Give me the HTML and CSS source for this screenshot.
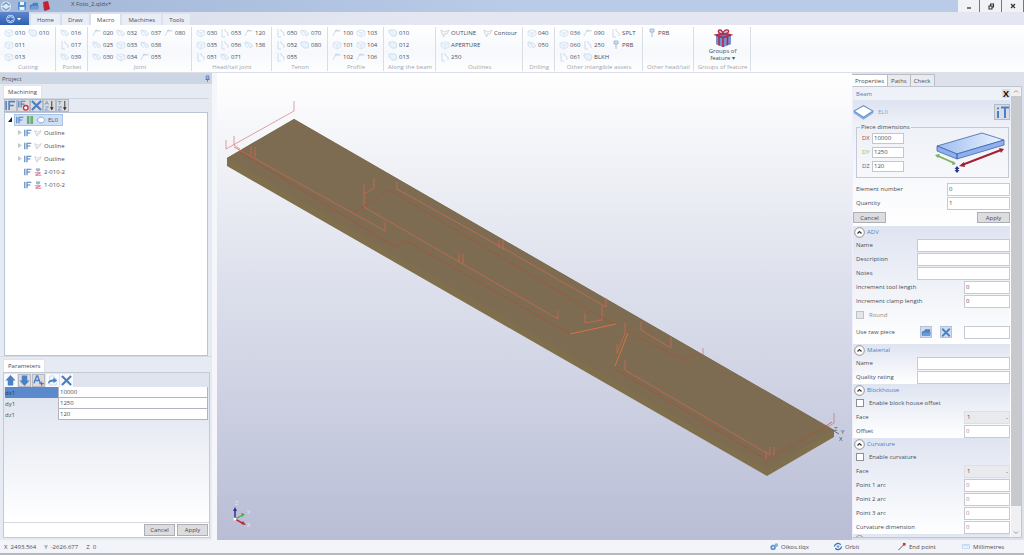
FILE: index.html
```html
<!DOCTYPE html>
<html lang="en">
<head>
<meta charset="utf-8">
<title>X Foto_2.qldx*</title>
<link rel="stylesheet" href="styles.css">
</head>
<body>
<svg class="defs" aria-hidden="true">
  <symbol id="box" viewBox="0 0 10 10"><path d="M1 3l4-1 4 1v4l-4 2-4-2zM1 3l4 2 4-2M5 5v4" fill="#eef4fb" stroke="#c3d8ee" stroke-width=".7"/></symbol>
  <symbol id="bend" viewBox="0 0 10 10"><path d="M2 1v8h3M5 3l3 2v3M5 3V1" fill="none" stroke="#bdd3eb"/></symbol>
  <symbol id="cut" viewBox="0 0 10 10"><path d="M1 2l5 1 3 3-3 2-2-4zM1 2v3l3 3" fill="#e8f1fa" stroke="#bdd5ee" stroke-width=".8"/></symbol>
  <symbol id="saw" viewBox="0 0 10 10"><path d="M1 8l3-6 5 1" fill="none" stroke="#c3d5e6"/><path d="M3 3h4" stroke="#9fb2c6" stroke-width=".7"/></symbol>
  <symbol id="slab" viewBox="0 0 10 10"><path d="M1 2h6l2 2-1 4H4L1 5z" fill="#e4f0fa" stroke="#b2d0ec" stroke-width=".8"/></symbol>
  <symbol id="outl" viewBox="0 0 10 10"><path d="M1 2l4 2 4-2-2 4H4v3L2 6z" fill="#fafafa" stroke="#b3b7bd" stroke-width=".7"/></symbol>
  <symbol id="pin" viewBox="0 0 10 10"><path d="M3 1h4v3H3zM5 4v5" fill="#c7dbf0" stroke="#6d96c8" stroke-width=".8"/></symbol>
  <symbol id="if" viewBox="0 0 12 12"><path d="M1.200 1v10M4.500 11V1.800H11M4.500 6H9.500" fill="none" stroke="#4e7fbf" stroke-width="1.700"/></symbol>
  <symbol id="cross" viewBox="0 0 12 12"><path d="M1 1l10 10M11 1L1 11" stroke="#4a7fc4" stroke-width="2.400"/></symbol>
  <symbol id="arrow" viewBox="0 0 12 12"><path d="M6 0l5.500 6H9v5.500H3V6H.5z" fill="#4a80c6"/></symbol>
  <symbol id="op" viewBox="0 0 10 10"><path d="M3 1h4v2H3zM5 3v2" fill="#bcd0ea" stroke="#6d93c8" stroke-width=".8"/><path d="M1 6h7M2 9h7M8 6L2 9" stroke="#d1596b" fill="none"/></symbol>
  <symbol id="plate" viewBox="0 0 20 14"><path d="M1 6v2l9 6 9-6V6l-9 6z" fill="#8cb2e2" stroke="#6b97d2" stroke-width=".5"/><path d="M1 6l9-5 9 5-9 6z" fill="#fff" stroke="#6b97d2"/></symbol>
  <symbol id="chev" viewBox="0 0 11 11"><circle cx="5.500" cy="5.500" r="4.800" fill="#fff" stroke="#777" stroke-width=".8"/><path d="M3.500 6.500l2-2 2 2" fill="none" stroke="#333" stroke-width="1.200"/></symbol>
  <symbol id="sort" viewBox="0 0 12 12"><path d="M1 5l2-4 2 4M1.500 4h3M1 7.500h4l-4 3.500h4" fill="none" stroke="#6d9bd2" stroke-width=".9"/><path d="M8.500 1v9" stroke="#333"/><path d="M6.500 8h4l-2 3.500z" fill="#333"/></symbol>
  <symbol id="folder" viewBox="0 0 12 10"><path d="M1 9V4l3-1 1-2h6v8z" fill="#4b82c4"/><path d="M1 9l2-4h9l-1 4z" fill="#6c9cd6"/></symbol>
</svg>

<header class="titlebar">
  <div class="quick">
    <svg class="logo" viewBox="0 0 12 12"><circle cx="6" cy="6" r="5.500" fill="#dce8f5"/><path d="M2 5l4-3 4 3M2 7l4 3 4-3" fill="none" stroke="#6a96bd" stroke-width="1.300"/></svg>
    <svg class="i10" viewBox="0 0 10 10"><path d="M1 1h8v8H1z" fill="#4d8fd0"/><path d="M3 1h4v3H3zM2.500 6h5v3h-5z" fill="#eaf3fc"/></svg>
    <svg class="i10" viewBox="0 0 12 10"><use href="#folder"/></svg>
    <svg class="i10" viewBox="0 0 10 10"><path d="M2 1l5-1 2 8-5 2z" fill="#c41f35"/><path d="M2 1l2 9-1-1z" fill="#7c1020"/></svg>
  </div>
  <h1>X Foto_2.qldx*</h1>
  <div class="winbtns"><button aria-label="Minimize"><svg viewBox="0 0 8 8"><path d="M2 6h4" stroke="#333" stroke-width="1.300"/></svg></button><button aria-label="Restore"><svg viewBox="0 0 8 8"><path d="M2 4h3v3H2zM3.500 4V2h3v3H5" fill="none" stroke="#333" stroke-width="1.100"/></svg></button><button aria-label="Close"><svg viewBox="0 0 8 8"><path d="M2 2l4 4M6 2L2 6" stroke="#333" stroke-width="1.200"/></svg></button></div>
</header>

<nav class="tabs">
  <button class="app" aria-label="Application menu"><svg viewBox="0 0 18 10"><circle cx="5.500" cy="5" r="3.800" fill="none" stroke="#c5dbf7"/><path d="M3 4l2.500-1.500L8 4M3 6l2.500 1.500L8 6" fill="none" stroke="#dceafc" stroke-width=".9"/><path d="M12 4h4l-2 2.500z" fill="#fff"/></svg></button>
  <button>Home</button><button>Draw</button><button class="on">Macro</button><button>Machines</button><button>Tools</button>
</nav>

<section class="ribbon">
  <div class="group"><div class="items">
    <button><svg><use href="#box"/></svg>010</button><button><svg><use href="#box"/></svg>011</button><button><svg><use href="#box"/></svg>013</button><button><svg><use href="#slab"/></svg>010</button></div><h2>Cutting</h2></div>
  <div class="group"><div class="items">
    <button><svg><use href="#cut"/></svg>016</button><button><svg><use href="#bend"/></svg>017</button><button><svg><use href="#cut"/></svg>039</button></div><h2>Pocket</h2></div>
  <div class="group"><div class="items">
    <button><svg><use href="#saw"/></svg>020</button><button><svg><use href="#cut"/></svg>025</button><button><svg><use href="#cut"/></svg>030</button>
    <button><svg><use href="#cut"/></svg>032</button><button><svg><use href="#box"/></svg>033</button><button><svg><use href="#box"/></svg>034</button>
    <button><svg><use href="#cut"/></svg>037</button><button><svg><use href="#cut"/></svg>038</button><button><svg><use href="#saw"/></svg>055</button>
    <button><svg><use href="#saw"/></svg>080</button></div><h2>Joint</h2></div>
  <div class="group"><div class="items">
    <button><svg><use href="#box"/></svg>030</button><button><svg><use href="#box"/></svg>035</button><button><svg><use href="#bend"/></svg>051</button>
    <button><svg><use href="#bend"/></svg>053</button><button><svg><use href="#bend"/></svg>056</button><button><svg><use href="#cut"/></svg>071</button>
    <button><svg><use href="#saw"/></svg>120</button><button><svg><use href="#cut"/></svg>138</button></div><h2>Head/tail joint</h2></div>
  <div class="group"><div class="items">
    <button><svg><use href="#bend"/></svg>050</button><button><svg><use href="#bend"/></svg>052</button><button><svg><use href="#bend"/></svg>055</button>
    <button><svg><use href="#cut"/></svg>070</button><button><svg><use href="#slab"/></svg>080</button></div><h2>Tenon</h2></div>
  <div class="group"><div class="items">
    <button><svg><use href="#saw"/></svg>100</button><button><svg><use href="#box"/></svg>101</button><button><svg><use href="#saw"/></svg>102</button>
    <button><svg><use href="#box"/></svg>103</button><button><svg><use href="#box"/></svg>104</button><button><svg><use href="#saw"/></svg>106</button></div><h2>Profile</h2></div>
  <div class="group"><div class="items">
    <button><svg><use href="#slab"/></svg>010</button><button><svg><use href="#slab"/></svg>012</button><button><svg><use href="#slab"/></svg>013</button></div><h2>Along the beam</h2></div>
  <div class="group"><div class="items free">
    <button><svg><use href="#outl"/></svg>OUTLINE</button><button><svg><use href="#box"/></svg>APERTURE</button><button><svg><use href="#bend"/></svg>250</button>
    <button><svg><use href="#outl"/></svg>Contour</button></div><h2>Outlines</h2></div>
  <div class="group"><div class="items">
    <button><svg><use href="#box"/></svg>040</button><button><svg><use href="#cut"/></svg>050</button></div><h2>Drilling</h2></div>
  <div class="group"><div class="items wide">
    <button><svg><use href="#box"/></svg>036</button><button><svg><use href="#box"/></svg>060</button><button><svg><use href="#bend"/></svg>061</button>
    <button><svg><use href="#saw"/></svg>090</button><button><svg><use href="#bend"/></svg>250</button><button><svg><use href="#slab"/></svg>BLKH</button>
    <button><svg><use href="#bend"/></svg>SPLT</button><button><svg><use href="#pin"/></svg>PRB</button></div><h2>Other intangible assets</h2></div>
  <div class="group"><div class="items">
    <button><svg><use href="#pin"/></svg>PRB</button></div><h2>Other head/tail</h2></div>
  <div class="group"><button class="big"><svg viewBox="0 0 20 20"><path d="M3 7l8-2 7 2v9l-8 3-7-3z" fill="#5a74c0"/><path d="M3 7l7 3 8-3v9l-8 3-7-3z" fill="#7590d4"/><path d="M6 8v9.500M10 10v9M14.500 8.500V17M3 7l7 3 8-3-7-2z" fill="none" stroke="#b12a45" stroke-width="1.600"/><path d="M10 6C5 6 4 2 7 2c2 0 3 3 3 4 0-2 2-5 5-4 2 2-1 4-5 4" fill="#e8b9c8" stroke="#b12a45" stroke-width="1.300"/></svg>Groups of<br>feature ▾</button><h2>Groups of feature</h2></div>
</section>

<main class="work">
  <aside class="left">
    <div class="dockhead">Project<svg viewBox="0 0 8 8"><path d="M2.500 1h3v4h-3zM1.500 5h5M4 5v3" fill="#a9bfe6" stroke="#4d6fb4" stroke-width=".8"/></svg></div>
    <div class="machining">
      <div class="tab">Machining</div>
      <div class="tools boxed">
        <button aria-label="If"><svg><use href="#if"/></svg></button>
        <button aria-label="Remove if"><svg viewBox="0 0 12 12"><use href="#if" width="9" height="9"/><circle cx="8.500" cy="8.500" r="2.500" fill="#fff" stroke="#d02c3a" stroke-width="1.500"/></svg></button>
        <button aria-label="Delete"><svg><use href="#cross"/></svg></button>
        <button aria-label="Sort ascending"><svg><use href="#sort"/></svg></button>
        <button aria-label="Sort by type"><svg viewBox="0 0 12 12"><path d="M1 1.500h4M3 1.500V5M1 7.500h4l-4 3.500h4" fill="none" stroke="#6d9bd2"/><path d="M8.500 1v9" stroke="#333"/><path d="M6.500 8h4l-2 3.500z" fill="#333"/></svg></button>
      </div>
      <ul class="tree">
        <li class="root"><i class="open"></i><span class="sel"><svg><use href="#if"/></svg><svg viewBox="0 0 9 9"><path d="M1 0h3v9H1zM5 0h3v9H5z" fill="#6eae68"/></svg><svg class="pl" viewBox="0 0 12 10"><path d="M1 5l3-3.500h4L11 5 8 8.500H4z" fill="#fff" stroke="#6f9ad2"/></svg>EL0</span></li>
        <li><i class="shut"></i><svg><use href="#if"/></svg><svg><use href="#outl"/></svg>Outline</li>
        <li><i class="shut"></i><svg><use href="#if"/></svg><svg><use href="#outl"/></svg>Outline</li>
        <li><i class="shut"></i><svg><use href="#if"/></svg><svg><use href="#outl"/></svg>Outline</li>
        <li><i></i><svg><use href="#if"/></svg><svg><use href="#op"/></svg>2-010-2</li>
        <li><i></i><svg><use href="#if"/></svg><svg><use href="#op"/></svg>1-010-2</li>
      </ul>
    </div>
    <div class="params">
      <div class="tab">Parameters</div>
      <div class="parbox">
        <div class="tools">
          <button aria-label="Move up"><svg><use href="#arrow"/></svg></button>
          <button aria-label="Move down" class="gray"><svg class="flip"><use href="#arrow"/></svg></button>
          <button aria-label="Add text" class="gray"><svg viewBox="0 0 12 12"><path d="M1 9l3-8h1l3 8M2.500 6h4" fill="none" stroke="#4a80c6" stroke-width="1.500"/><path d="M9.500 7v5M7 9.500h5" stroke="#d02c3a"/></svg></button>
          <button aria-label="Export"><svg viewBox="0 0 12 12"><path d="M3 1h4l3 3v7H3z" fill="#f6f9fd" stroke="#b8c9df" stroke-width=".7"/><path d="M1 10c0-4 3-5 6-5V2.500L11 6 7 9V7C4 7 2 8 1 10z" fill="#4a80c6"/></svg></button>
          <button aria-label="Delete parameter"><svg><use href="#cross"/></svg></button>
        </div>
        <table>
          <tr class="cur"><th><label for="dx1">dx1</label></th><td><input id="dx1" value="10000"></td></tr>
          <tr><th><label for="dy1">dy1</label></th><td><input id="dy1" value="1250"></td></tr>
          <tr><th><label for="dz1">dz1</label></th><td><input id="dz1" value="120"></td></tr>
        </table>
        <div class="foot"><button class="btn">Cancel</button><button class="btn">Apply</button></div>
      </div>
    </div>
  </aside>

  <section class="view">
    <svg viewBox="217 73 635 467">
      <path d="M227 158l67-39 540 311v7l-67 39-540-310z" fill="#7f6f4c"/>
      <path d="M227 158l67-39 540 311-67 39z" fill="#7e6c52"/>
      <g fill="none" stroke="#c8505a" stroke-opacity=".65" stroke-width=".8">
        <path d="M226 140v9l68-38v-10M234 136v9l6 4M834 413v10l-8 5M703 348v8"/>
      </g>
      <g fill="none" stroke="#c96a52" stroke-opacity=".9" stroke-width=".9">
        <path d="M234 147l151 84v-9M251 146v9M255 147v10M364 184v23l97 56 97 56v-8M364 194l10-6v-10M397 182v7l106 59 103 59v-9M602 306v14l-17 3v-10M499 240v8M503 240v10M459 253v9M463 254v10M625 323v10l-8 20v-9M641 322v8l30 18v-11M625 360v10l145 85v-8M774 447v9M766 451v9"/>
      </g>
      <g fill="none" stroke="#a94f35" stroke-opacity=".75" stroke-width=".9">
        <path d="M240 152l155 95 10-7 165 94M355 212l34-22 226 135M628 332l55 28 10-6M613 368l154 92 57-33 8-5"/>
      </g>
      <path d="M570 334l46-10M628 333l-13 33" stroke="#d8733f" fill="none"/>
      <path d="M834 431l5 3" stroke="#39474f" stroke-width=".7"/>
      <g class="axis"><text x="834" y="431">Z</text><text x="841" y="434">Y</text><text x="839" y="441">X</text></g>
      <path d="M235 519v-10" stroke="#2c3193" stroke-width="1.500"/><path d="M233 511h4l-2-4z" fill="#2c3193"/>
      <path d="M235 519l8-4" stroke="#4ea552" stroke-width="1.300"/><path d="M241 513l4 1-3 3z" fill="#4ea552"/>
      <path d="M235 519l9 5" stroke="#c22b3c" stroke-width="1.500"/><path d="M241 524l2-3 3 4z" fill="#c22b3c"/>
      <circle cx="235" cy="519" r="1.500" fill="#fff"/>
      <g class="axis pale"><text x="235" y="505">Z</text><text x="247" y="514">Y</text><text x="247" y="527">X</text></g>
    </svg>
  </section>

  <aside class="right">
    <div class="rtabs"><button class="on">Properties</button><button>Paths</button><button>Check</button></div>
    <div class="rbody">
      <form class="props">
        <div class="cap">Beam<button type="button" class="x" aria-label="Close panel">X</button></div>
        <div class="elem"><svg class="plate"><use href="#plate"/></svg><span>EL0</span><button type="button" class="it" aria-label="Text info"><svg viewBox="0 0 14 14"><path d="M3 6v7M3 2.500v1.800M6 2.500h8M10 2.500V13" stroke="#4a80c6" stroke-width="2" fill="none"/></svg></button></div>
        <fieldset><legend>Piece dimensions</legend>
          <div class="dims">
            <div class="dim red"><label for="dx">DX</label><input id="dx" value="10000"></div>
            <div class="dim green"><label for="dy">DY</label><input id="dy" value="1250"></div>
            <div class="dim blue"><label for="dz">DZ</label><input id="dz" value="120"></div>
          </div>
          <svg class="slab" viewBox="0 0 72 42"><defs><linearGradient id="sl" x1="0" x2="1"><stop offset="0" stop-color="#9dbcf0"/><stop offset="1" stop-color="#edf4ff"/></linearGradient></defs><path d="M3 15L48 2l22 7L23 23z" fill="url(#sl)" stroke="#3f66b0" stroke-width=".8"/><path d="M3 15l20 8v5L3 20zM23 23L70 9v5L23 28z" fill="#8fb0ea" stroke="#3f66b0" stroke-width=".8"/><path d="M28 34l39-15" stroke="#a02232" stroke-width="2"/><path d="M25 35l5-4 1 5zM70 18l-5-1 2 5z" fill="#a02232"/><path d="M4 25l16 7" stroke="#77b255" stroke-width="1.800"/><path d="M1 24l5-1-2 4zM22 33l-4 1 1-4z" fill="#77b255"/><path d="M23 37v3" stroke="#28348e" stroke-width="2"/><path d="M20.500 38L23 35l2.500 3zM20.500 39l2.500 3 2.500-3z" fill="#28348e"/></svg>
        </fieldset>
        <div class="row mid"><label for="en">Element number</label><input id="en" value="0"></div>
        <div class="row mid"><label for="qt">Quantity</label><input id="qt" value="1"></div>
        <div class="acts"><button type="button" class="btn">Cancel</button><button type="button" class="btn">Apply</button></div>

        <section class="sec adv"><h3><svg><use href="#chev"/></svg>ADV</h3>
          <div class="row"><label for="an">Name</label><input id="an"></div>
          <div class="row"><label for="ad">Description</label><input id="ad"></div>
          <div class="row"><label for="ao">Notes</label><input id="ao"></div>
          <div class="row sm"><label for="it">Increment tool length</label><input id="it" value="0"></div>
          <div class="row sm"><label for="ic">Increment clamp length</label><input id="ic" value="0"></div>
          <div class="row chk off"><input type="checkbox" id="rd" disabled><label for="rd">Round</label></div>
          <div class="row sm raw"><label for="rp">Use raw piece</label><button type="button" aria-label="Browse"><svg viewBox="0 0 12 10"><use href="#folder"/></svg></button><button type="button" aria-label="Clear"><svg><use href="#cross"/></svg></button><input id="rp"></div>
        </section>
        <section class="sec"><h3><svg><use href="#chev"/></svg>Material</h3>
          <div class="row"><label for="mn">Name</label><input id="mn"></div>
          <div class="row"><label for="mq">Quality rating</label><input id="mq"></div>
        </section>
        <section class="sec"><h3><svg><use href="#chev"/></svg>Blockhouse</h3>
          <div class="row chk"><input type="checkbox" id="bh"><label for="bh">Enable block house offset</label></div>
          <div class="row sm"><label for="bf">Face</label><select id="bf"><option>1</option></select></div>
          <div class="row sm dis"><label for="bo">Offset</label><input id="bo" value="0"></div>
        </section>
        <section class="sec"><h3><svg><use href="#chev"/></svg>Curvature</h3>
          <div class="row chk"><input type="checkbox" id="cv"><label for="cv">Enable curvature</label></div>
          <div class="row sm"><label for="cf">Face</label><select id="cf"><option>1</option></select></div>
          <div class="row sm dis"><label for="p1">Point 1 arc</label><input id="p1" value="0"></div>
          <div class="row sm dis"><label for="p2">Point 2 arc</label><input id="p2" value="0"></div>
          <div class="row sm dis"><label for="p3">Point 3 arc</label><input id="p3" value="0"></div>
          <div class="row sm dis"><label for="cd">Curvature dimension</label><input id="cd" value="0"></div>
        </section>
        <section class="sec"><h3><svg><use href="#chev"/></svg></h3></section>
      </form>
      <div class="scroll"><svg viewBox="0 0 8 8"><path d="M2 5l2-2 2 2" fill="none" stroke="#999"/></svg><div class="thumb"></div><svg viewBox="0 0 8 8"><path d="M2 3l2 2 2-2" fill="none" stroke="#999"/></svg></div>
    </div>
  </aside>
</main>

<footer class="status">
  <div class="coords"><span>X&nbsp; 2493.564</span><span>Y&nbsp; -2626.677</span><span>Z&nbsp; 0</span></div>
  <div class="modes">
    <span class="m1"><svg viewBox="0 0 10 10"><circle cx="4" cy="6" r="3" fill="#5f93d0"/><circle cx="7.500" cy="3.500" r="2" fill="#7fb0e2"/><circle cx="4" cy="6" r="1" fill="#fff"/></svg>Oikos.tlqx</span>
    <span class="m2"><svg viewBox="0 0 10 10"><path d="M1 5a4 4 0 0 1 7-2M9 5a4 4 0 0 1-7 2" fill="none" stroke="#3d6fb5" stroke-width="1.500"/><circle cx="5" cy="5" r="1.500" fill="#6c9cd6"/></svg>Orbit</span>
    <span class="m3"><svg viewBox="0 0 10 10"><path d="M1 9l6-6" stroke="#555"/><path d="M6 1h3v3H6z" fill="#c9364a"/></svg>End point</span>
    <span class="m4"><svg viewBox="0 0 10 10"><path d="M1 3h8v4H1zM3 3v2M5 3v2M7 3v2" fill="#f3f8fd" stroke="#a8cbea" stroke-width=".8"/></svg>Millimetres</span>
  </div>
</footer>
</body>
</html>
```
FILE: styles.css
```css
* { box-sizing: border-box; }
body {
  margin: 0;
  height: 100vh;
  display: flex;
  flex-direction: column;
  overflow: hidden;
  background: #eef1f7;
  color: #4a4d55;
  font: 6px/8px "Open Sans", "Noto Sans", sans-serif;
}
button, input, select { font: inherit; color: inherit; margin: 0; padding: 0; border: 0; border-radius: 0; background: none; }
h1, h2, h3 { margin: 0; font: inherit; }
svg { display: block; flex: none; }
.defs { position: absolute; width: 0; height: 0; }

.titlebar { flex: none; height: 12px; display: flex; align-items: center; background: linear-gradient(90deg, #a2b6d7, #b9cbe6 50%); }
.quick { display: flex; gap: 2px; width: 71px; }
.logo { width: 12px; height: 11px; margin-right: 3px; }
.i10 { width: 10px; height: 10px; }
.titlebar h1 { flex: 1; align-self: flex-start; line-height: 8px; }
.winbtns { display: flex; align-self: stretch; }
.winbtns button { width: 22px; display: flex; align-items: center; justify-content: center; background: #f1f2f5; border-right: 1px solid #777; }
.winbtns svg { width: 8px; height: 8px; }

.tabs { flex: none; height: 13px; display: flex; gap: 2px; background: linear-gradient(90deg, #d5dcea, #e4e7f1 40%); align-items: flex-end; }
.tabs button { height: 11px; padding: 0 6px; background: #e9edf5; }
.tabs .on { background: #fff; }
.tabs .app { height: 13px; width: 29px; padding: 0 5px; background: linear-gradient(#5d86cc, #2f5fb3); }
.app svg { width: 18px; height: 10px; }

.ribbon { flex: none; height: 48px; display: flex; padding: 2px 0 1px; background: linear-gradient(#fff, #f6f8fc 60%, #fff); border-bottom: 1px solid #dadfea; }
.group { display: flex; flex-direction: column; padding: 0 3px 0 4px; border-right: 1px solid #d9dde6; }
.items { flex: 1; display: grid; grid-auto-flow: column; grid-template-rows: repeat(3, 12px); grid-auto-columns: 24px; }
.items.free { grid-auto-columns: 43px 36px; }
.items.wide { grid-auto-columns: 24px 28px 28px; }
.items button { display: flex; align-items: center; gap: 1px; white-space: nowrap; }
.items svg { width: 10px; height: 10px; opacity: .75; }
.group h2 { text-align: center; color: #a3a6ad; line-height: 8px; white-space: nowrap; }
.big { flex: 1; display: block; line-height: 7px; }
.big svg { width: 20px; height: 20px; margin: 0 auto; }

.work { flex: 1; min-height: 0; display: flex; background: #f4f6fa; }
.left { width: 212px; flex: none; display: flex; flex-direction: column; background: #e6eaf3; }
.dockhead { height: 11px; flex: none; display: flex; align-items: center; justify-content: space-between; padding: 0 1px 0 2px; background: #ccd5e4; }
.dockhead svg { width: 7px; height: 7px; }
.tab { align-self: flex-start; height: 13px; padding: 0 4px; line-height: 13px; background: #fff; border: 1px solid #dfe3ea; border-bottom: 0; }
.machining { flex: 1; min-height: 0; display: flex; flex-direction: column; padding: 1px 3px 0; }
.tools { display: flex; height: 14px; align-items: center; flex: none; }
.tools button { width: 13px; height: 13px; display: flex; align-items: center; justify-content: center; }
.tools svg { width: 11px; height: 11px; }
.boxed { padding-left: 1px; border-top: 1px solid #cfd6e3; }
.boxed button, .tools .gray { background: #dcdcde; border: 1px solid #b7bac2; }
.tree { flex: 1; margin: 0 1px; padding: 0 0 0 3px; list-style: none; background: #fff; border: 1px solid #b9c4d6; }
.tree li { display: flex; align-items: center; gap: 2px; height: 13px; padding-left: 10px; }
.tree .root { padding-left: 0; }
.tree svg { width: 8px; height: 8px; }
.tree li i { width: 4px; height: 5px; }
.tree .shut { clip-path: polygon(0 0, 100% 50%, 0 100%); background: #c5c8ce; }
.tree .open { clip-path: polygon(100% 0, 100% 100%, 0 100%); background: #222; }
.sel { display: flex; align-items: center; gap: 2px; height: 12px; padding: 0 4px 0 1px; background: #cfe0f6; border: 1px solid #a9c2e6; }
.tree .pl { width: 10px; }

.params { flex: none; height: 184px; display: flex; flex-direction: column; padding: 2px 2px 2px 3px; border-top: 1px solid #d5dae5; }
.parbox { flex: 1; display: flex; flex-direction: column; border: 1px solid #c3c9d5; background: linear-gradient(#dfe4ef 20px, #fff 90%); }
.parbox .tools { gap: 1px; }
.parbox .tools button { background: #f8fafd; }
.parbox .tools .gray { background: #dcdcde; }
.flip { transform: rotate(180deg); }
.parbox table { width: 100%; border-spacing: 0; padding: 0 1px; }
.parbox th { width: 53px; padding: 0; text-align: left; font-weight: normal; }
.parbox td { padding: 0; }
.parbox td input { display: block; width: 100%; height: 11px; padding-left: 1px; background: #fff; border: 1px solid #b1b4bc; border-top-width: 0; }
.cur th { background: #5a8acb; color: #1d3c70; }
.foot { margin-top: auto; display: flex; justify-content: flex-end; gap: 2px; padding: 1px; background: #fff; border-top: 1px solid #d5d8df; }
.btn { width: 31px; height: 12px; background: #dddddf; border: 1px solid #adafb5; line-height: 8px; }

.view { flex: 1; min-width: 0; margin-left: 5px; background: linear-gradient(#fff, #dde0ec 45%, #b9bdd5); }
.view svg { width: 100%; height: 100%; }
.axis text { font-size: 6px; fill: #46525c; }
.axis.pale text { fill: #e6e8f1; }

.right { width: 172px; flex: none; display: flex; flex-direction: column; padding: 1px 2px 2px 0; background: #dce1ec; }
.rtabs { display: flex; flex: none; height: 12px; }
.rtabs button { padding: 0 3px; background: #e9ebf0; border: 1px solid #b9bdc6; border-width: 1px 1px 0 0; }
.rtabs .on { background: #fff; }
.rbody { flex: 1; min-height: 0; display: flex; border: 1px solid #c0c5d0; border-left-color: #eef; }
.props { flex: 1; overflow: hidden; padding-right: 1px; background: linear-gradient(#e7ebf4, #fff 140px); }
.scroll { width: 10px; display: flex; flex-direction: column; background: #f0f0f2; }
.scroll svg { width: 8px; height: 9px; margin: 0 auto; }
.scroll .thumb { flex: 1; margin-bottom: 22px; background: #c8c9cd; }
.cap { display: flex; justify-content: space-between; height: 13px; align-items: center; padding: 0 0 0 3px; color: #4f7fc6; background: #eef1f8; }
.cap .x { width: 8px; font: bold 9px/9px "Open Sans", sans-serif; color: #111; background: #dcdde0; }
.elem { display: flex; align-items: center; height: 23px; gap: 4px; color: #7fa0d3; background: linear-gradient(#dde3f0, #edf0f7); }
.plate { width: 21px; height: 16px; }
.elem .it { margin-left: auto; width: 16px; height: 16px; background: #d7dce6; border: 1px solid #b4bac6; }
.it svg { width: 14px; height: 14px; }
fieldset { margin: 0 1px 4px 3px; padding: 0 2px 1px 5px; border: 1px solid #c4c9d3; height: 55px; min-width: 0; display: flex; justify-content: space-between; }
legend { padding: 0 1px; margin-left: -2px; line-height: 8px; }
.dim { display: flex; align-items: center; gap: 2px; height: 14px; }
.dim input { width: 32px; height: 11px; padding-left: 1px; background: #fff; border: 1px solid #c2c6d0; }
.dim label { width: 8px; }
.red label { color: #cc3348; } .green label { color: #8fc069; } .blue label { color: #55668f; }
.slab { width: 72px; height: 42px; }
.row { display: flex; align-items: center; height: 14px; padding-left: 3px; }
.row label { flex: 1; white-space: nowrap; }
.row > input:not([type]) { width: 93px; height: 13px; padding-left: 1px; background: #fff; border: 1px solid #c6cad4; }
.row.mid > input:not([type]) { width: 63px; }
.row.sm > input:not([type]), .row select { width: 46px; }
.row.dis input { color: #8c9098; }
.row select { height: 13px; appearance: none; padding-left: 2px; background: #e9eaed linear-gradient(#bbb, #bbb) no-repeat 41px 6px / 2px 1px; border: 1px solid #dddfe5; }
.acts { display: flex; justify-content: space-between; padding: 2px 0 3px; }
.acts .btn { width: 33px; height: 11px; }
.sec { background: linear-gradient(#dfe4f1, #fff); }
.sec h3 { display: flex; align-items: center; gap: 2px; height: 12px; color: #4f7fc6; padding-left: 1px; }
.sec h3 svg { width: 11px; height: 11px; }
.adv { padding-bottom: 2px; }
.chk { gap: 5px; }
.chk input { appearance: none; width: 8px; height: 8px; background: #fff; border: 1px solid #8d9098; }
.chk.off input { background: #e4e5e8; border-color: #c0c2c8; }
.chk.off { color: #8b8e95; }
.row.raw { height: 20px; }
.raw button { width: 12px; height: 12px; margin-right: 8px; background: #cfdcee; border: 1px solid #b5c3d8; display: flex; align-items: center; justify-content: center; }
.raw button:nth-of-type(2) { margin-right: 12px; }
.raw button svg { width: 10px; height: 9px; }

.status { flex: none; height: 15px; display: flex; justify-content: space-between; align-items: center; padding: 0 5px 0 4px; background: #f2f4f9; border-bottom: 2px solid #b4b7bd; }
.coords { display: flex; gap: 8px; }
.modes { display: flex; }
.modes span { display: flex; align-items: center; gap: 2px; }
.modes svg { width: 10px; height: 9px; }
.m1, .m2, .m3 { width: 64px; }
.m4 { width: 58px; }
```
